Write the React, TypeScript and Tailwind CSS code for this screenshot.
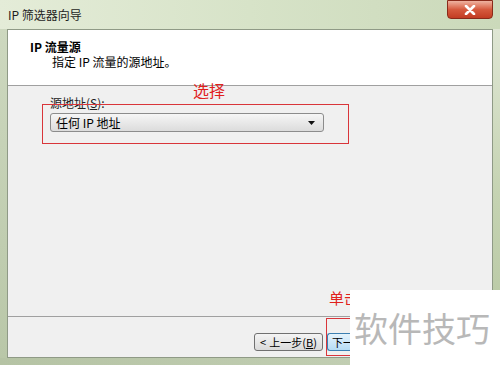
const font = { fontFamily: '"Noto Sans CJK SC", "Liberation Sans", sans-serif' };

export default function App() {
  return (
    <div
      className="relative flex h-[365px] w-[500px] flex-col overflow-hidden bg-[#c3cfb4] text-[12px] text-black"
      style={font}
    >
      {/* title bar */}
      <div className="relative flex h-[29px] shrink-0 items-center bg-gradient-to-r from-[#e4ecd8] via-[#d7e3c8] to-[#cbd9ba] pl-[8px]">
        <span className="text-[12px] leading-none text-[#1e1e1e]">IP 筛选器向导</span>
        <div className="absolute right-[7px] top-0 flex h-[19px] w-[46px] items-center justify-center rounded-b-[4px] border border-[#8a2a1a] bg-gradient-to-b from-[#eeb2a0] via-[#d65a3e] to-[#c23c22]">
          <svg width="12" height="10" viewBox="0 0 12 10">
            <path d="M2 1 L10 9 M10 1 L2 9" stroke="#fff" strokeWidth="2.6" strokeLinecap="round" />
          </svg>
        </div>
      </div>

      <div className="flex min-h-0 flex-1">
        <div className="w-[7px] shrink-0 bg-gradient-to-b from-[#cdd8bf] to-[#b9c7a8]" />
        <div className="flex flex-1 flex-col border border-[#8f9a86] bg-[#f0f0f0]">
          {/* header */}
          <div className="flex h-[56px] shrink-0 flex-col border-b border-[#a0a0a0] bg-white pl-[22px] pt-[9px]">
            <div className="font-bold leading-[15px]">IP 流量源</div>
            <div className="pl-[22px] leading-[15px]">指定 IP 流量的源地址。</div>
          </div>

          {/* body */}
          <div className="flex flex-1 flex-col px-[42px] pt-[10px]">
            <div className="leading-[14px] text-[#222]">
              源地址(<u>S</u>):
            </div>
            <div className="mt-[3px] flex h-[19px] w-[274px] items-center justify-between rounded-[3px] border border-[#8c8c8c] bg-gradient-to-b from-[#f6f6f6] to-[#dcdcdc] pl-[5px] pr-[8px]">
              <span>任何 IP 地址</span>
              <svg width="7" height="4" viewBox="0 0 7 4">
                <path d="M0 0 H7 L3.5 4 Z" fill="#111" />
              </svg>
            </div>
          </div>

          {/* footer */}
          <div className="flex h-[41px] shrink-0 items-start gap-[4px] border-t border-[#a0a0a0] pl-[246px] pt-[16px]">
            <div className="flex h-[18px] w-[69px] items-center justify-center gap-[3px] rounded-[3px] border border-[#707070] bg-gradient-to-b from-[#f4f4f4] to-[#dadada] text-[11px]">
              <span>&lt;</span>
              <span>
                上一步(<u>B</u>)
              </span>
            </div>
            <div className="flex h-[18px] w-[26px] items-center overflow-hidden whitespace-nowrap rounded-l-[3px] border border-r-0 border-[#3c7fb1] bg-gradient-to-b from-[#e5f3fc] to-[#b6dcf5] pl-[4px] text-[11px]">
              下一
            </div>
          </div>
        </div>
        <div className="w-[7px] shrink-0 bg-gradient-to-b from-[#dfe6d4] via-[#c5d3b2] to-[#b6c6a2]" />
      </div>
      <div className="h-[7px] shrink-0 bg-gradient-to-r from-[#b5c3a4] to-[#c6d2b8]" />

      {/* annotations */}
      <div className="absolute left-[193px] top-[82px] text-[16px] leading-none text-[#e0201c]">选择</div>
      <div className="absolute left-[42px] top-[104px] h-[40px] w-[307px] border border-[#d9353a]" />
      <div className="absolute left-[329px] top-[290px] text-[15px] leading-none text-[#e0201c]">单击</div>
      <div className="absolute left-[326px] top-[318px] h-[38px] w-[60px] border border-[#d9353a]" />

      {/* watermark */}
      <div className="absolute left-[350px] top-[290px] flex h-[75px] w-[150px] items-center bg-white pl-[4px]">
        <span className="text-[34px] leading-none text-[#b8b8b8]">软件技巧</span>
      </div>
    </div>
  );
}
